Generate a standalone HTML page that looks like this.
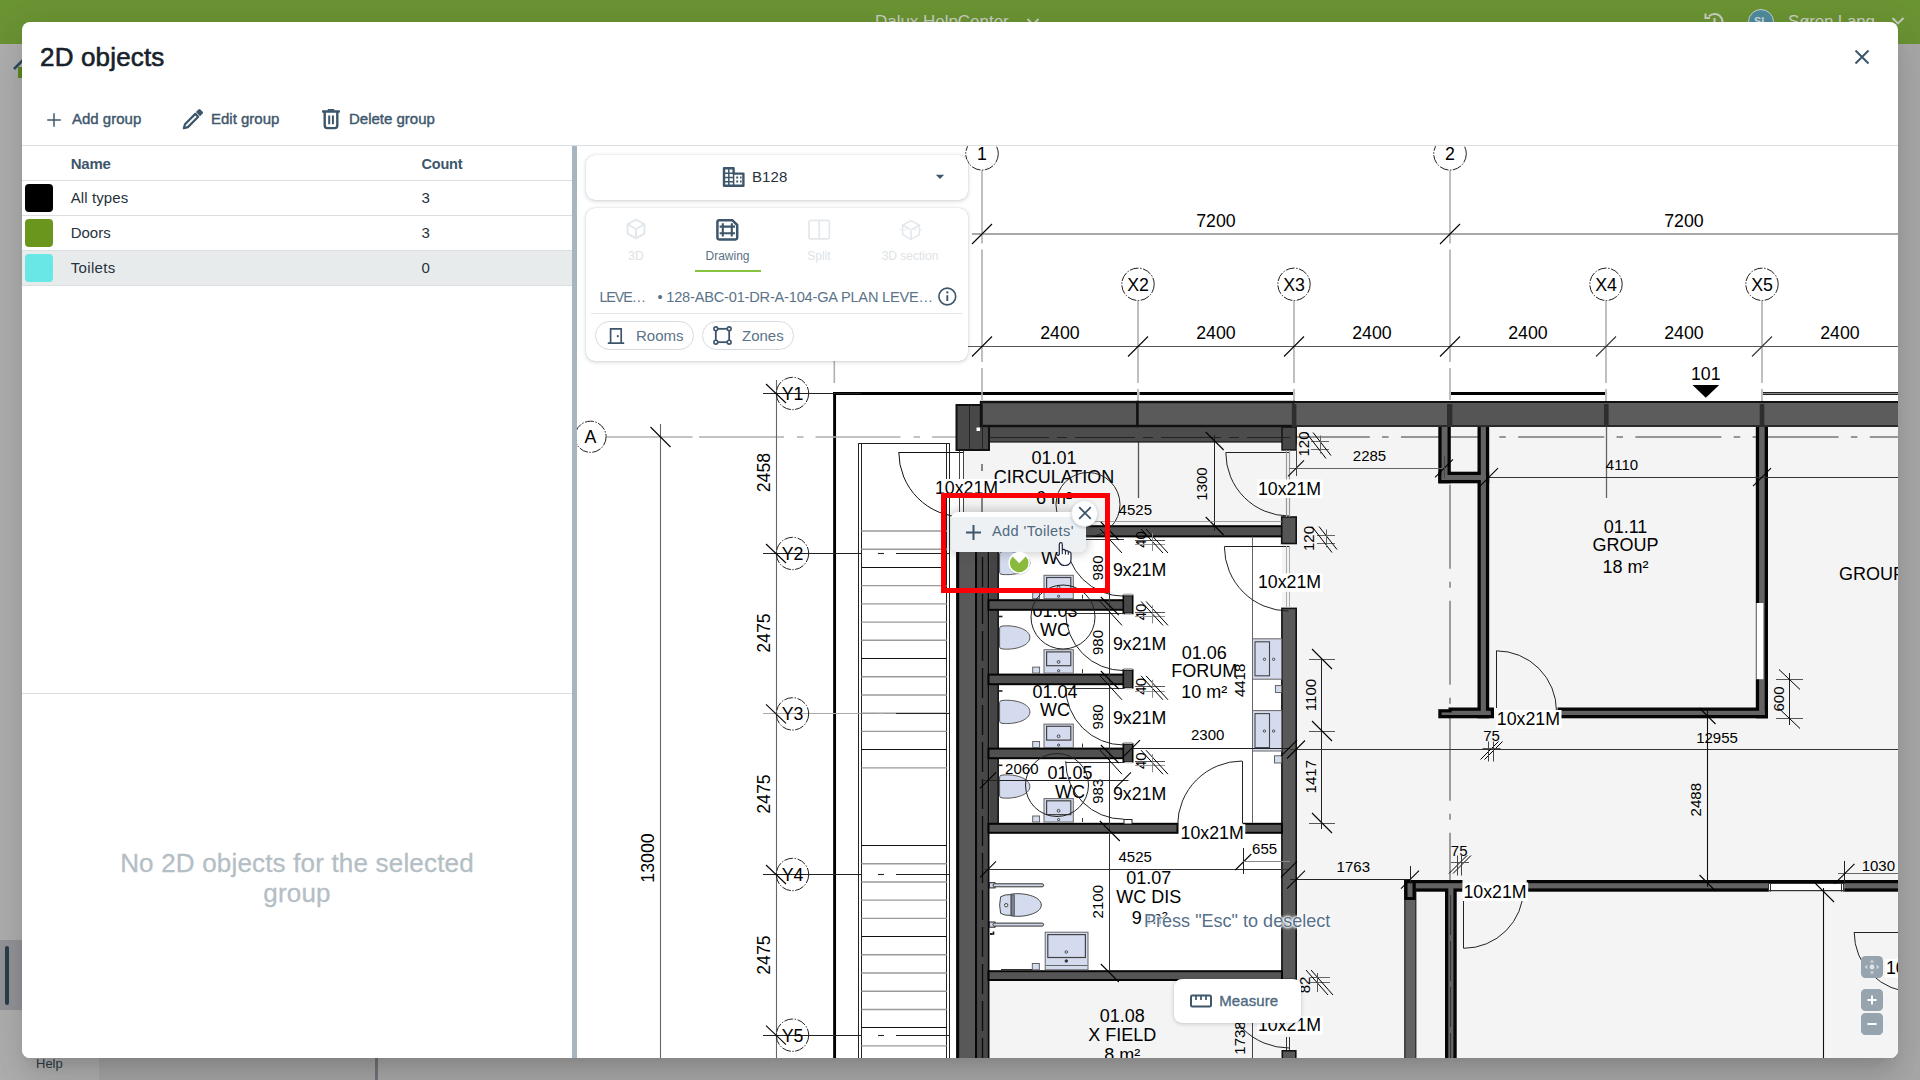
<!DOCTYPE html>
<html lang="en">
<head>
<meta charset="utf-8">
<title>2D objects</title>
<style>
*{box-sizing:border-box;margin:0;padding:0}
html,body{width:1920px;height:1080px;overflow:hidden}
body{font-family:"Liberation Sans",sans-serif;background:#a7a7a7;position:relative;color:#26323c}
.abs{position:absolute}
/* ---------- dimmed app behind the modal ---------- */
#topbar{left:0;top:0;width:1920px;height:44px;background:#6b9433}
#topbar .t{color:#c9cfc2;font-size:17px;white-space:nowrap;line-height:20px}
#leftstrip{left:0;top:44px;width:375px;height:1036px;background:linear-gradient(90deg,#b0b0b0 0,#b0b0b0 99px,#a6a6a6 99px)}
#rightarea{left:375px;top:44px;width:1545px;height:1036px;background:#a9a9a9}
#vline{left:375px;top:44px;width:3px;height:1036px;background:#6f7579}
#selitem{left:0;top:940px;width:22px;height:70px;background:#939598}
#selbar{left:4.5px;top:945.5px;width:4.5px;height:59.5px;border-radius:3px;background:#2c3e4b}
#help{left:36px;top:1056px;font-size:13px;color:#2f3b45;line-height:16px}
/* ---------- modal ---------- */
#modal{left:22px;top:22px;width:1876px;height:1036px;background:#fff;border-radius:8px;overflow:hidden;
 box-shadow:0 11px 15px -7px rgba(0,0,0,.12),0 24px 38px 3px rgba(0,0,0,.08),0 9px 46px 8px rgba(0,0,0,.07)}
#title{left:18px;top:20px;font-size:26px;line-height:30px;color:#17222c;white-space:nowrap;-webkit-text-stroke:.6px #17222c;letter-spacing:.17px}
#closex{left:1832px;top:27px;width:16px;height:16px}
.tb{top:84px;height:26px;font-size:15px;line-height:26px;color:#3d566b;white-space:nowrap;-webkit-text-stroke:.4px #3d566b}
#hr1{left:0;top:123px;width:1876px;height:1px;background:#d9dfe3}
/* left list */
#list{left:0;top:124px;width:550px;height:912px;background:#fff}
.th{top:8px;font-size:14.5px;font-weight:700;color:#3d566b;line-height:20px;letter-spacing:-.2px}
.row{left:0;width:550px;height:35px;border-top:1px solid #d9dfe3}
.row .sw{left:3px;top:3px;width:28px;height:28px;border-radius:4px}
.row .nm{left:48.7px;top:7px;font-size:15px;line-height:20px;color:#26323c;white-space:nowrap}
.row .ct{left:399.5px;top:7px;font-size:15px;line-height:20px;color:#26323c}
#hr2{left:0;top:547px;width:550px;height:1px;background:#d9dfe3}
#empty{left:0;top:702px;width:550px;text-align:center;font-size:26px;line-height:30px;color:#b4bec5;letter-spacing:.18px;-webkit-text-stroke:.3px #b4bec5}
#split{left:550px;top:124px;width:5px;height:912px;background:#a9b5be}
/* viewer */
#viewer{left:555px;top:124px;width:1321px;height:912px;background:#fff;overflow:hidden}
</style>
</head>
<body>
<!-- dimmed application behind -->
<div id="leftstrip" class="abs"></div>
<div id="rightarea" class="abs"></div>
<div id="vline" class="abs"></div>
<div id="topbar" class="abs">
  <div class="t abs" style="left:875px;top:11.5px;letter-spacing:-.03px">Dalux HelpCenter</div>
  <svg class="abs" style="left:1025.5px;top:16.6px" width="14" height="10" viewBox="0 0 14 10"><path d="M1.5 2 L7 7.5 L12.5 2" fill="none" stroke="#c9cfc2" stroke-width="1.8"/></svg>
  <svg class="abs" style="left:1702px;top:10px" width="24" height="24" viewBox="0 0 24 24"><path d="M4.5 12a8 8 0 1 0 2.4-5.7M3.5 3.5v4.5h4.5M12.5 8v4.5l3 2" fill="none" stroke="#c9cfc2" stroke-width="2"/></svg>
  <div class="abs" style="left:1748px;top:9px;width:26px;height:26px;border-radius:13px;background:#4f8c9c;border:1.5px solid #c9cfd2;color:#c9d6da;font-size:11px;font-weight:700;text-align:center;line-height:23px">SL</div>
  <div class="t abs" style="left:1788px;top:11.6px;letter-spacing:-.2px">Søren Lang</div>
  <svg class="abs" style="left:1891px;top:16px" width="14" height="10" viewBox="0 0 14 10"><path d="M1.5 2 L7 7.5 L12.5 2" fill="none" stroke="#c9cfc2" stroke-width="1.8"/></svg>
</div>
<svg class="abs" style="left:12px;top:58px" width="24" height="22" viewBox="0 0 24 22"><path d="M2 11 L12 1 L22 11" fill="none" stroke="#33485a" stroke-width="2.5"/><rect x="6" y="9" width="12" height="11" fill="#5f8a22"/></svg>
<div id="selitem" class="abs"></div>
<div id="selbar" class="abs"></div>
<div id="help" class="abs">Help</div>

<!-- modal dialog -->
<div id="modal" class="abs">
  <div id="title" class="abs">2D objects</div>
  <svg id="closex" class="abs" viewBox="0 0 16 16"><path d="M1.5 1.5 L14.5 14.5 M14.5 1.5 L1.5 14.5" stroke="#3d566b" stroke-width="2" fill="none"/></svg>

  <svg class="abs" style="left:24px;top:90px" width="16" height="16" viewBox="0 0 16 16"><path d="M8 1.2V14.8M1.2 8H14.8" stroke="#3d566b" stroke-width="1.5" fill="none"/></svg>
  <div class="tb abs" style="left:50px">Add group</div>
  <svg class="abs" style="left:160px;top:86px" width="22" height="22" viewBox="0 0 22 22"><path d="M1.8 20.3 L3.0 16.2 L13.3 5.9 L16.2 8.8 L5.9 19.1 Z" fill="none" stroke="#3d566b" stroke-width="2.2" stroke-linejoin="round"/><path d="M13.9 4.0 L16.5 1.4 Q17.4 0.6 18.3 1.4 L20.7 3.8 Q21.5 4.7 20.7 5.6 L18.1 8.2 Z" fill="#3d566b"/></svg>
  <div class="tb abs" style="left:189px">Edit group</div>
  <svg class="abs" style="left:300px;top:86px" width="18" height="22" viewBox="0 0 18 22"><path d="M2.7 4 V17.6 Q2.7 20.1 5.2 20.1 H12.8 Q15.3 20.1 15.3 17.6 V4" fill="none" stroke="#3d566b" stroke-width="2.4"/><path d="M1 3.4H17" stroke="#3d566b" stroke-width="2.5" stroke-linecap="round" fill="none"/><path d="M5.8 1.9H12.2" stroke="#3d566b" stroke-width="1.8" fill="none"/><path d="M7.2 7.4V16.2M10.9 7.4V16.2" stroke="#3d566b" stroke-width="2" fill="none"/></svg>
  <div class="tb abs" style="left:327px">Delete group</div>
  <div id="hr1" class="abs"></div>

  <div id="list" class="abs">
    <div class="th abs" style="left:48.7px;font-size:15px">Name</div>
    <div class="th abs" style="left:399.5px">Count</div>
    <div class="row abs" style="top:34px"><div class="sw abs" style="background:#000"></div><div class="nm abs" style="letter-spacing:.1px">All types</div><div class="ct abs">3</div></div>
    <div class="row abs" style="top:69px"><div class="sw abs" style="background:#6b961d"></div><div class="nm abs">Doors</div><div class="ct abs">3</div></div>
    <div class="row abs" style="top:104px;background:#e8ebec"><div class="sw abs" style="background:#69e6e6"></div><div class="nm abs" style="letter-spacing:.35px">Toilets</div><div class="ct abs">0</div></div>
    <div class="row abs" style="top:139px;height:1px"></div>
    <div id="hr2" class="abs"></div>
    <div id="empty" class="abs">No 2D objects for the selected<br>group</div>
  </div>
  <div id="split" class="abs"></div>

  <div id="viewer" class="abs">
<svg class="abs" style="left:-577px;top:-146px" width="1920" height="1080" viewBox="0 0 1920 1080" font-family="Liberation Sans, sans-serif">
<rect x="1296" y="427" width="604" height="633" fill="#f4f4f4"/>
<rect x="964" y="442" width="332" height="84" fill="#f4f4f4"/>
<rect x="988" y="980" width="308" height="80" fill="#f4f4f4"/>
<rect x="1282" y="543" width="14" height="66" fill="#f4f4f4"/>
<line x1="858.5" y1="443.5" x2="858.5" y2="1060" stroke="#222" stroke-width="1"/>
<line x1="861.5" y1="443.5" x2="861.5" y2="1060" stroke="#222" stroke-width="1"/>
<line x1="946.5" y1="443.5" x2="946.5" y2="1060" stroke="#222" stroke-width="1"/>
<line x1="949.5" y1="443.5" x2="949.5" y2="1060" stroke="#222" stroke-width="1"/>
<line x1="858.3" y1="443.5" x2="949.8" y2="443.5" stroke="#222" stroke-width="1.2"/>
<line x1="861.4" y1="531" x2="946.8" y2="531" stroke="#9a9a9a" stroke-width="1.4"/>
<line x1="861.4" y1="549.22" x2="946.8" y2="549.22" stroke="#9a9a9a" stroke-width="1.4"/>
<line x1="861.4" y1="567.5" x2="946.8" y2="567.5" stroke="#111" stroke-width="1.2"/>
<line x1="861.4" y1="585.66" x2="946.8" y2="585.66" stroke="#9a9a9a" stroke-width="1.4"/>
<line x1="861.4" y1="603.88" x2="946.8" y2="603.88" stroke="#9a9a9a" stroke-width="1.4"/>
<line x1="861.4" y1="622.1" x2="946.8" y2="622.1" stroke="#9a9a9a" stroke-width="1.4"/>
<line x1="861.4" y1="640.32" x2="946.8" y2="640.32" stroke="#9a9a9a" stroke-width="1.4"/>
<line x1="861.4" y1="658.5" x2="946.8" y2="658.5" stroke="#111" stroke-width="1.2"/>
<line x1="861.4" y1="676.76" x2="946.8" y2="676.76" stroke="#9a9a9a" stroke-width="1.4"/>
<line x1="861.4" y1="694.98" x2="946.8" y2="694.98" stroke="#9a9a9a" stroke-width="1.4"/>
<line x1="861.4" y1="713.2" x2="946.8" y2="713.2" stroke="#9a9a9a" stroke-width="1.4"/>
<line x1="861.4" y1="731.42" x2="946.8" y2="731.42" stroke="#9a9a9a" stroke-width="1.4"/>
<line x1="861.4" y1="749.5" x2="946.8" y2="749.5" stroke="#111" stroke-width="1.2"/>
<line x1="861.4" y1="767.86" x2="946.8" y2="767.86" stroke="#9a9a9a" stroke-width="1.4"/>
<line x1="861.4" y1="845.5" x2="946.8" y2="845.5" stroke="#111" stroke-width="1.2"/>
<line x1="861.4" y1="863.72" x2="946.8" y2="863.72" stroke="#9a9a9a" stroke-width="1.4"/>
<line x1="861.4" y1="881.94" x2="946.8" y2="881.94" stroke="#9a9a9a" stroke-width="1.4"/>
<line x1="861.4" y1="900.16" x2="946.8" y2="900.16" stroke="#9a9a9a" stroke-width="1.4"/>
<line x1="861.4" y1="918.38" x2="946.8" y2="918.38" stroke="#9a9a9a" stroke-width="1.4"/>
<line x1="861.4" y1="936.5" x2="946.8" y2="936.5" stroke="#111" stroke-width="1.2"/>
<line x1="861.4" y1="954.82" x2="946.8" y2="954.82" stroke="#9a9a9a" stroke-width="1.4"/>
<line x1="861.4" y1="973.04" x2="946.8" y2="973.04" stroke="#9a9a9a" stroke-width="1.4"/>
<line x1="861.4" y1="991.26" x2="946.8" y2="991.26" stroke="#9a9a9a" stroke-width="1.4"/>
<line x1="861.4" y1="1009.48" x2="946.8" y2="1009.48" stroke="#9a9a9a" stroke-width="1.4"/>
<line x1="861.4" y1="1027.5" x2="946.8" y2="1027.5" stroke="#111" stroke-width="1.2"/>
<line x1="861.4" y1="1045.92" x2="946.8" y2="1045.92" stroke="#9a9a9a" stroke-width="1.4"/>
<text x="1054" y="464" font-size="18" text-anchor="middle" fill="#000">01.01</text>
<text x="1054" y="482.6" font-size="18" text-anchor="middle" fill="#000">CIRCULATION</text>
<text x="1054" y="503.9" font-size="18" text-anchor="middle" fill="#000">6 m²</text>
<text x="1041" y="564.4" font-size="18" text-anchor="start" fill="#000">WC</text>
<text x="1055" y="616.9" font-size="18" text-anchor="middle" fill="#000">01.03</text>
<text x="1055" y="635.5" font-size="18" text-anchor="middle" fill="#000">WC</text>
<text x="1055" y="697.5" font-size="18" text-anchor="middle" fill="#000">01.04</text>
<text x="1055" y="716.1" font-size="18" text-anchor="middle" fill="#000">WC</text>
<text x="1070" y="779.2" font-size="18" text-anchor="middle" fill="#000">01.05</text>
<text x="1070" y="797.8" font-size="18" text-anchor="middle" fill="#000">WC</text>
<text x="1204.2" y="658.5" font-size="18" text-anchor="middle" fill="#000">01.06</text>
<text x="1204.2" y="677.1" font-size="18" text-anchor="middle" fill="#000">FORUM</text>
<text x="1204.2" y="698.4" font-size="18" text-anchor="middle" fill="#000">10 m²</text>
<text x="1148.8" y="884" font-size="18" text-anchor="middle" fill="#000">01.07</text>
<text x="1148.8" y="902.6" font-size="18" text-anchor="middle" fill="#000">WC DIS</text>
<text x="1131.7" y="923.5" font-size="18" text-anchor="start" fill="#000">9 m²</text>
<text x="1122.3" y="1022" font-size="18" text-anchor="middle" fill="#000">01.08</text>
<text x="1122.3" y="1040.7" font-size="18" text-anchor="middle" fill="#000">X FIELD</text>
<text x="1122.3" y="1061.1" font-size="18" text-anchor="middle" fill="#000">8 m²</text>
<text x="1625.5" y="532.5" font-size="18" text-anchor="middle" fill="#000">01.11</text>
<text x="1625.5" y="551.3" font-size="18" text-anchor="middle" fill="#000">GROUP</text>
<text x="1625.5" y="572.5" font-size="18" text-anchor="middle" fill="#000">18 m²</text>
<text x="1839" y="580" font-size="18" text-anchor="start" fill="#000">GROUP</text>
<line x1="833.1" y1="393.4" x2="1137" y2="393.4" stroke="#000" stroke-width="3"/>
<line x1="1139.5" y1="393.4" x2="1293" y2="393.4" stroke="#000" stroke-width="3"/>
<line x1="1451" y1="393.4" x2="1605" y2="393.4" stroke="#000" stroke-width="3"/>
<line x1="1763" y1="392.5" x2="1900" y2="392.5" stroke="#222" stroke-width="1"/>
<line x1="1763" y1="394.5" x2="1900" y2="394.5" stroke="#222" stroke-width="1"/>
<line x1="1763" y1="393.5" x2="1900" y2="393.5" stroke="#888" stroke-width="1.2"/>
<line x1="834.6" y1="392" x2="834.6" y2="1060" stroke="#000" stroke-width="2.9"/>
<line x1="834.3" y1="215" x2="834.3" y2="383" stroke="#b0b0b0" stroke-width="1.6"/>
<line x1="982" y1="170.5" x2="982" y2="243.5" stroke="#b0b0b0" stroke-width="1.6"/>
<line x1="982" y1="249.5" x2="982" y2="362" stroke="#b0b0b0" stroke-width="1.6"/>
<line x1="982" y1="368" x2="982" y2="400" stroke="#b0b0b0" stroke-width="1.6"/>
<line x1="1450" y1="170.5" x2="1450" y2="243.5" stroke="#b0b0b0" stroke-width="1.6"/>
<line x1="1450" y1="249.5" x2="1450" y2="362" stroke="#b0b0b0" stroke-width="1.6"/>
<line x1="1450" y1="368" x2="1450" y2="400" stroke="#b0b0b0" stroke-width="1.6"/>
<line x1="1138" y1="300.5" x2="1138" y2="383" stroke="#b0b0b0" stroke-width="1.6"/>
<line x1="1138" y1="389" x2="1138" y2="401" stroke="#b0b0b0" stroke-width="1.6"/>
<line x1="1294" y1="300.5" x2="1294" y2="383" stroke="#b0b0b0" stroke-width="1.6"/>
<line x1="1294" y1="389" x2="1294" y2="401" stroke="#b0b0b0" stroke-width="1.6"/>
<line x1="1606" y1="300.5" x2="1606" y2="383" stroke="#b0b0b0" stroke-width="1.6"/>
<line x1="1606" y1="389" x2="1606" y2="401" stroke="#b0b0b0" stroke-width="1.6"/>
<line x1="1762" y1="300.5" x2="1762" y2="383" stroke="#b0b0b0" stroke-width="1.6"/>
<line x1="1762" y1="389" x2="1762" y2="401" stroke="#b0b0b0" stroke-width="1.6"/>
<line x1="606.5" y1="437" x2="692.6" y2="437" stroke="#b0b0b0" stroke-width="1.6"/>
<line x1="699" y1="437" x2="956" y2="437" stroke="#b0b0b0" stroke-width="1.6" stroke-dasharray="85 13 6.5 12"/>
<line x1="1296" y1="437" x2="1900" y2="437" stroke="#777" stroke-width="1.4" stroke-dasharray="86 12.3 6.5 12.4" stroke-dashoffset="12.2"/>
<line x1="1450" y1="483" x2="1450" y2="1060" stroke="#777" stroke-width="1.4" stroke-dasharray="84 13 6 13" stroke-dashoffset="-1.8"/>
<line x1="1138.5" y1="442" x2="1138.5" y2="498" stroke="#555" stroke-width="1.3"/>
<line x1="982" y1="464" x2="982" y2="471" stroke="#555" stroke-width="1.4"/>
<line x1="982" y1="480" x2="982" y2="512" stroke="#555" stroke-width="1.4"/>
<line x1="1606.5" y1="427" x2="1606.5" y2="498" stroke="#666" stroke-width="1.3"/>
<line x1="972" y1="234" x2="1900" y2="234" stroke="#a8a8a8" stroke-width="1.8"/>
<line x1="972" y1="244" x2="992" y2="224" stroke="#000" stroke-width="1.1"/>
<line x1="1440" y1="244" x2="1460" y2="224" stroke="#000" stroke-width="1.1"/>
<line x1="966" y1="346.5" x2="1900" y2="346.5" stroke="#555" stroke-width="1.1"/>
<line x1="972" y1="356.5" x2="992" y2="336.5" stroke="#000" stroke-width="1.1"/>
<line x1="1128" y1="356.5" x2="1148" y2="336.5" stroke="#000" stroke-width="1.1"/>
<line x1="1284" y1="356.5" x2="1304" y2="336.5" stroke="#000" stroke-width="1.1"/>
<line x1="1440" y1="356.5" x2="1460" y2="336.5" stroke="#000" stroke-width="1.1"/>
<line x1="1596" y1="356.5" x2="1616" y2="336.5" stroke="#333" stroke-width="1.1"/>
<line x1="1752" y1="356.5" x2="1772" y2="336.5" stroke="#333" stroke-width="1.1"/>
<text x="1216" y="227" font-size="17.75" text-anchor="middle" fill="#000">7200</text>
<text x="1684" y="227" font-size="17.75" text-anchor="middle" fill="#000">7200</text>
<text x="1060" y="339.4" font-size="17.75" text-anchor="middle" fill="#000">2400</text>
<text x="1216" y="339.4" font-size="17.75" text-anchor="middle" fill="#000">2400</text>
<text x="1372" y="339.4" font-size="17.75" text-anchor="middle" fill="#000">2400</text>
<text x="1528" y="339.4" font-size="17.75" text-anchor="middle" fill="#000">2400</text>
<text x="1684" y="339.4" font-size="17.75" text-anchor="middle" fill="#000">2400</text>
<text x="1840" y="339.4" font-size="17.75" text-anchor="middle" fill="#000">2400</text>
<circle cx="982" cy="153.8" r="16.3" fill="#fff" stroke="#222" stroke-width="1" stroke-dasharray="9 1.5 1.5 1.5"/>
<text x="982" y="160" font-size="17.75" text-anchor="middle" fill="#000">1</text>
<circle cx="1450" cy="153.8" r="16.3" fill="#fff" stroke="#222" stroke-width="1" stroke-dasharray="9 1.5 1.5 1.5"/>
<text x="1450" y="160" font-size="17.75" text-anchor="middle" fill="#000">2</text>
<circle cx="1138" cy="284.3" r="16.2" fill="#fff" stroke="#222" stroke-width="1" stroke-dasharray="9 1.5 1.5 1.5"/>
<text x="1138" y="290.6" font-size="17.75" text-anchor="middle" fill="#000">X2</text>
<circle cx="1294" cy="284.3" r="16.2" fill="#fff" stroke="#222" stroke-width="1" stroke-dasharray="9 1.5 1.5 1.5"/>
<text x="1294" y="290.6" font-size="17.75" text-anchor="middle" fill="#000">X3</text>
<circle cx="1606" cy="284.3" r="16.2" fill="#fff" stroke="#222" stroke-width="1" stroke-dasharray="9 1.5 1.5 1.5"/>
<text x="1606" y="290.6" font-size="17.75" text-anchor="middle" fill="#000">X4</text>
<circle cx="1762" cy="284.3" r="16.2" fill="#fff" stroke="#222" stroke-width="1" stroke-dasharray="9 1.5 1.5 1.5"/>
<text x="1762" y="290.6" font-size="17.75" text-anchor="middle" fill="#000">X5</text>
<text x="1705.8" y="380" font-size="17.75" text-anchor="middle" fill="#000">101</text>
<path d="M1692.5 385 H1719.2 L1705.8 397.7 Z" fill="#000" stroke="none" stroke-width="0"/>
<line x1="660.5" y1="424" x2="660.5" y2="1060" stroke="#666" stroke-width="1.1"/>
<line x1="650.5" y1="427" x2="670.5" y2="447" stroke="#000" stroke-width="1.1"/>
<line x1="776.5" y1="380" x2="776.5" y2="1060" stroke="#666" stroke-width="1.1"/>
<line x1="763" y1="393.5" x2="834" y2="393.5" stroke="#222" stroke-width="1.2"/>
<line x1="834" y1="393.5" x2="861" y2="393.5" stroke="#222" stroke-width="1.0"/>
<line x1="766" y1="384" x2="786" y2="403" stroke="#000" stroke-width="1.1"/>
<circle cx="792.5" cy="393.5" r="16.2" fill="none" stroke="#222" stroke-width="1" stroke-dasharray="9 1.5 1.5 1.5"/>
<text x="792.5" y="399.8" font-size="17.75" text-anchor="middle" fill="#000">Y1</text>
<line x1="763" y1="553.5" x2="834" y2="553.5" stroke="#222" stroke-width="1.2"/>
<line x1="834" y1="553.5" x2="861" y2="553.5" stroke="#222" stroke-width="1.0"/>
<line x1="878" y1="553.5" x2="884" y2="553.5" stroke="#222" stroke-width="1.1"/>
<line x1="896" y1="553.5" x2="950" y2="553.5" stroke="#222" stroke-width="1.1"/>
<line x1="766" y1="544" x2="786" y2="563" stroke="#000" stroke-width="1.1"/>
<circle cx="792.5" cy="553.5" r="16.2" fill="none" stroke="#222" stroke-width="1" stroke-dasharray="9 1.5 1.5 1.5"/>
<text x="792.5" y="559.8" font-size="17.75" text-anchor="middle" fill="#000">Y2</text>
<line x1="763" y1="713.5" x2="834" y2="713.5" stroke="#aaa" stroke-width="1.2"/>
<line x1="834" y1="713.5" x2="861" y2="713.5" stroke="#aaa" stroke-width="1.0"/>
<line x1="878" y1="713.5" x2="884" y2="713.5" stroke="#aaa" stroke-width="1.1"/>
<line x1="896" y1="713.5" x2="950" y2="713.5" stroke="#222" stroke-width="1.1"/>
<line x1="766" y1="704.4" x2="786" y2="723.4" stroke="#000" stroke-width="1.1"/>
<circle cx="792.5" cy="713.9" r="16.2" fill="none" stroke="#222" stroke-width="1" stroke-dasharray="9 1.5 1.5 1.5"/>
<text x="792.5" y="720.2" font-size="17.75" text-anchor="middle" fill="#000">Y3</text>
<line x1="763" y1="874.5" x2="834" y2="874.5" stroke="#222" stroke-width="1.2"/>
<line x1="834" y1="874.5" x2="861" y2="874.5" stroke="#222" stroke-width="1.0"/>
<line x1="878" y1="874.5" x2="884" y2="874.5" stroke="#222" stroke-width="1.1"/>
<line x1="896" y1="874.5" x2="950" y2="874.5" stroke="#222" stroke-width="1.1"/>
<line x1="766" y1="865" x2="786" y2="884" stroke="#000" stroke-width="1.1"/>
<circle cx="792.5" cy="874.5" r="16.2" fill="none" stroke="#222" stroke-width="1" stroke-dasharray="9 1.5 1.5 1.5"/>
<text x="792.5" y="880.8" font-size="17.75" text-anchor="middle" fill="#000">Y4</text>
<line x1="763" y1="1035.5" x2="834" y2="1035.5" stroke="#222" stroke-width="1.2"/>
<line x1="834" y1="1035.5" x2="861" y2="1035.5" stroke="#222" stroke-width="1.0"/>
<line x1="878" y1="1035.5" x2="884" y2="1035.5" stroke="#222" stroke-width="1.1"/>
<line x1="896" y1="1035.5" x2="950" y2="1035.5" stroke="#222" stroke-width="1.1"/>
<line x1="766" y1="1025.7" x2="786" y2="1044.7" stroke="#000" stroke-width="1.1"/>
<circle cx="792.5" cy="1035.2" r="16.2" fill="none" stroke="#222" stroke-width="1" stroke-dasharray="9 1.5 1.5 1.5"/>
<text x="792.5" y="1041.5" font-size="17.75" text-anchor="middle" fill="#000">Y5</text>
<text x="769.5" y="472.5" font-size="17.75" text-anchor="middle" fill="#000" transform="rotate(-90 769.5 472.5)">2458</text>
<text x="769.5" y="633" font-size="17.75" text-anchor="middle" fill="#000" transform="rotate(-90 769.5 633)">2475</text>
<text x="769.5" y="794" font-size="17.75" text-anchor="middle" fill="#000" transform="rotate(-90 769.5 794)">2475</text>
<text x="769.5" y="955" font-size="17.75" text-anchor="middle" fill="#000" transform="rotate(-90 769.5 955)">2475</text>
<text x="653.5" y="858" font-size="17.75" text-anchor="middle" fill="#000" transform="rotate(-90 653.5 858)">13000</text>
<circle cx="590.5" cy="436.8" r="15.6" fill="#fff" stroke="#222" stroke-width="1" stroke-dasharray="9 1.5 1.5 1.5"/>
<text x="590.5" y="443.2" font-size="17.75" text-anchor="middle" fill="#000">A</text>
<line x1="898.8" y1="452.5" x2="964" y2="452.5" stroke="#111" stroke-width="1"/>
<path d="M898.8 452.1 A65 65 0 0 0 964 517.1" fill="none" stroke="#111" stroke-width="1"/>
<line x1="959.5" y1="450" x2="959.5" y2="513" stroke="#444" stroke-width="1"/>
<line x1="963.5" y1="450" x2="963.5" y2="513" stroke="#444" stroke-width="1"/>
<rect x="989" y="425" width="307" height="17" fill="#4c4c4c" stroke="#1a1a1a" stroke-width="1.2"/>
<rect x="956.5" y="405" width="32.5" height="45" fill="#484848" stroke="#111" stroke-width="2"/>
<rect x="1282" y="427" width="14.2" height="23" fill="#484848" stroke="#111" stroke-width="1.4"/>
<rect x="981" y="402" width="156.5" height="24" fill="#575757" stroke="#111" stroke-width="2.4"/>
<rect x="1137.5" y="402" width="156.5" height="24" fill="#5a5a5a" stroke="#111" stroke-width="2.4"/>
<rect x="1294" y="402.6" width="606" height="23.6" fill="#5c5c5c" stroke="none" stroke-width="1"/>
<line x1="1294" y1="402.1" x2="1900" y2="402.1" stroke="#111" stroke-width="2"/>
<line x1="1294" y1="426" x2="1900" y2="426" stroke="#2a2a2a" stroke-width="2"/>
<rect x="1291.8" y="404" width="4.6" height="23" fill="#2e2e2e"/>
<rect x="1447" y="404" width="5.6" height="23" fill="#2e2e2e"/>
<rect x="1604" y="404" width="4.6" height="23" fill="#2e2e2e"/>
<rect x="1759.7" y="404" width="4.6" height="23" fill="#2e2e2e"/>
<rect x="1452.6" y="403.6" width="151.4" height="21.4" fill="#555"/>
<line x1="989" y1="437.5" x2="1290" y2="437.5" stroke="#222" stroke-width="1.2" stroke-dasharray="60 8 10 8"/>
<line x1="982.5" y1="404" x2="982.5" y2="450" stroke="#222" stroke-width="1"/>
<rect x="976.5" y="427.5" width="3.5" height="3.5" fill="#fff"/>
<line x1="969.5" y1="405" x2="969.5" y2="450" stroke="#222" stroke-width="1"/>
<rect x="956.2" y="517" width="33" height="543" fill="#4a4a4a"/>
<rect x="958.6" y="517" width="16.8" height="543" fill="#585858"/>
<rect x="956.2" y="517" width="3" height="543" fill="#080808"/>
<rect x="975" y="517" width="2.2" height="543" fill="#080808"/>
<rect x="977.2" y="517" width="10.8" height="543" fill="#474747"/>
<rect x="987.8" y="517" width="1.6" height="543" fill="#080808"/>
<line x1="982.5" y1="520" x2="982.5" y2="1060" stroke="#0c0c0c" stroke-width="1.3" stroke-dasharray="30 7"/>
<rect x="989.2" y="536" width="9.1" height="288" fill="#454545"/>
<line x1="998.2" y1="536" x2="998.2" y2="824" stroke="#0a0a0a" stroke-width="1.4"/>
<rect x="1085" y="526.2" width="197" height="10.2" fill="#505050" stroke="#050505" stroke-width="2"/>
<rect x="1281.7" y="517" width="14.5" height="26.5" fill="#555" stroke="#111" stroke-width="1.6"/>
<rect x="1281.9" y="608.4" width="14.3" height="371.1" fill="#595959" stroke="#111" stroke-width="1.6"/>
<rect x="1282.3" y="1050.8" width="13.5" height="9.2" fill="#595959" stroke="#111" stroke-width="1.6"/>
<rect x="988.5" y="600.2" width="135.5" height="9.6" fill="#505050" stroke="#050505" stroke-width="2"/>
<rect x="1123.3" y="595.5" width="9.4" height="17.9" fill="#484848" stroke="#050505" stroke-width="1.6"/>
<rect x="1123.5" y="593.5" width="9.2" height="2" fill="#b5b5b5"/>
<rect x="1125" y="613.4" width="7" height="1.6" fill="#c8c8c8"/>
<rect x="988.5" y="674.6" width="135.5" height="9.6" fill="#505050" stroke="#050505" stroke-width="2"/>
<rect x="1123.3" y="669.9" width="9.4" height="17.9" fill="#484848" stroke="#050505" stroke-width="1.6"/>
<rect x="1123.5" y="667.9" width="9.2" height="2" fill="#b5b5b5"/>
<rect x="1125" y="687.8" width="7" height="1.6" fill="#c8c8c8"/>
<rect x="988.5" y="748.6" width="135.5" height="9.6" fill="#505050" stroke="#050505" stroke-width="2"/>
<rect x="1123.3" y="743.9" width="9.4" height="17.9" fill="#484848" stroke="#050505" stroke-width="1.6"/>
<rect x="1123.5" y="741.9" width="9.2" height="2" fill="#b5b5b5"/>
<rect x="1125" y="761.8" width="7" height="1.6" fill="#c8c8c8"/>
<rect x="988.5" y="823.8" width="189" height="9" fill="#555" stroke="#050505" stroke-width="2"/>
<rect x="1244" y="823.8" width="38" height="9" fill="#555" stroke="#050505" stroke-width="2"/>
<rect x="1124" y="819.5" width="8" height="4.5" fill="#fff" stroke="#222" stroke-width="1"/>
<rect x="988.5" y="971.2" width="293.5" height="8.8" fill="#555" stroke="#050505" stroke-width="2"/>
<line x1="1109.5" y1="536.6" x2="1109.5" y2="971" stroke="#333" stroke-width="1"/>
<line x1="1252.5" y1="536.6" x2="1252.5" y2="823" stroke="#666" stroke-width="1"/>
<line x1="1252.5" y1="1023" x2="1252.5" y2="1060" stroke="#444" stroke-width="1"/>
<path d="M999.6 553.6 Q999.4 551.5 1003 551.5 C1016 550.4 1029.9 555 1029.9 563 C1029.9 571 1016 575.6 1003 574.5 Q999.4 574.5 999.6 572.4 Z" fill="#d4dbee" stroke="#555" stroke-width="1"/>
<path d="M999.6 628.1 Q999.4 626 1003 626 C1016 624.9 1029.9 629.5 1029.9 637.5 C1029.9 645.5 1016 650.1 1003 649 Q999.4 649 999.6 646.9 Z" fill="#d4dbee" stroke="#555" stroke-width="1"/>
<path d="M999.6 702.5 Q999.4 700.4 1003 700.4 C1016 699.3 1029.9 703.9 1029.9 711.9 C1029.9 719.9 1016 724.5 1003 723.4 Q999.4 723.4 999.6 721.3 Z" fill="#d4dbee" stroke="#555" stroke-width="1"/>
<path d="M999.6 777.1 Q999.4 775 1003 775 C1016 773.9 1029.9 778.5 1029.9 786.5 C1029.9 794.5 1016 799.1 1003 798 Q999.4 798 999.6 795.9 Z" fill="#d4dbee" stroke="#555" stroke-width="1"/>
<rect x="1044" y="575.3" width="29.3" height="23.4" fill="#d4dbee" stroke="#666" stroke-width="1"/>
<rect x="1046.6" y="577.5" width="24.2" height="13.8" fill="#d4dbee" stroke="#444" stroke-width="1.2"/>
<circle cx="1058.6" cy="587.5" r="1.4" fill="none" stroke="#333" stroke-width="0.9"/>
<circle cx="1058.6" cy="596.3" r="1.1" fill="none" stroke="#333" stroke-width="0.9"/>
<rect x="1032.7" y="592.7" width="6.9" height="6" fill="#d4dbee" stroke="#555" stroke-width="0.9"/>
<line x1="1082.5" y1="594.8" x2="1082.5" y2="598.7" stroke="#333" stroke-width="1"/>
<rect x="1044" y="649.7" width="29.3" height="23.4" fill="#d4dbee" stroke="#666" stroke-width="1"/>
<rect x="1046.6" y="651.9" width="24.2" height="13.8" fill="#d4dbee" stroke="#444" stroke-width="1.2"/>
<circle cx="1058.6" cy="661.9" r="1.4" fill="none" stroke="#333" stroke-width="0.9"/>
<circle cx="1058.6" cy="670.7" r="1.1" fill="none" stroke="#333" stroke-width="0.9"/>
<rect x="1032.7" y="667.1" width="6.9" height="6" fill="#d4dbee" stroke="#555" stroke-width="0.9"/>
<line x1="1082.5" y1="669.2" x2="1082.5" y2="673.1" stroke="#333" stroke-width="1"/>
<rect x="1044" y="724.1" width="29.3" height="23.4" fill="#d4dbee" stroke="#666" stroke-width="1"/>
<rect x="1046.6" y="726.3" width="24.2" height="13.8" fill="#d4dbee" stroke="#444" stroke-width="1.2"/>
<circle cx="1058.6" cy="736.3" r="1.4" fill="none" stroke="#333" stroke-width="0.9"/>
<circle cx="1058.6" cy="745.1" r="1.1" fill="none" stroke="#333" stroke-width="0.9"/>
<rect x="1032.7" y="741.5" width="6.9" height="6" fill="#d4dbee" stroke="#555" stroke-width="0.9"/>
<line x1="1082.5" y1="743.6" x2="1082.5" y2="747.5" stroke="#333" stroke-width="1"/>
<rect x="1044" y="798.6" width="29.3" height="23.4" fill="#d4dbee" stroke="#666" stroke-width="1"/>
<rect x="1046.6" y="800.8" width="24.2" height="13.8" fill="#d4dbee" stroke="#444" stroke-width="1.2"/>
<circle cx="1058.6" cy="810.8" r="1.4" fill="none" stroke="#333" stroke-width="0.9"/>
<circle cx="1058.6" cy="819.6" r="1.1" fill="none" stroke="#333" stroke-width="0.9"/>
<rect x="1032.7" y="816" width="6.9" height="6" fill="#d4dbee" stroke="#555" stroke-width="0.9"/>
<line x1="1082.5" y1="818.1" x2="1082.5" y2="822" stroke="#333" stroke-width="1"/>
<line x1="998.5" y1="616.5" x2="1002.5" y2="616.5" stroke="#222" stroke-width="1.6"/>
<line x1="998.5" y1="691" x2="1002.5" y2="691" stroke="#222" stroke-width="1.6"/>
<line x1="998.5" y1="765.3" x2="1002.5" y2="765.3" stroke="#222" stroke-width="1.6"/>
<rect x="1252.5" y="638.8" width="29.2" height="40.4" fill="#d4dbee" stroke="#666" stroke-width="1"/>
<rect x="1255" y="641.8" width="14.5" height="34" fill="#d4dbee" stroke="#444" stroke-width="1.1"/>
<circle cx="1264.5" cy="659.3" r="1.2" fill="none" stroke="#333" stroke-width="0.8"/>
<circle cx="1273.6" cy="659.3" r="1.2" fill="none" stroke="#333" stroke-width="0.8"/>
<rect x="1252.5" y="710.6" width="29.2" height="40.4" fill="#d4dbee" stroke="#666" stroke-width="1"/>
<rect x="1255" y="713.6" width="14.5" height="34" fill="#d4dbee" stroke="#444" stroke-width="1.1"/>
<circle cx="1264.5" cy="731.1" r="1.2" fill="none" stroke="#333" stroke-width="0.8"/>
<circle cx="1273.6" cy="731.1" r="1.2" fill="none" stroke="#333" stroke-width="0.8"/>
<rect x="1275.4" y="685.6" width="6.3" height="6.9" fill="#d4dbee" stroke="#555" stroke-width="0.9"/>
<rect x="1274.5" y="755.8" width="7.2" height="7.2" fill="#d4dbee" stroke="#555" stroke-width="0.9"/>
<rect x="989.4" y="882.7" width="5.6" height="5.2" fill="#cfd6e6" stroke="#222" stroke-width="1"/>
<rect x="993" y="883.8" width="50.6" height="3" fill="#cfd6e6" stroke="#333" stroke-width="1" rx="1.5"/>
<rect x="989.4" y="922" width="5.6" height="5.2" fill="#cfd6e6" stroke="#222" stroke-width="1"/>
<rect x="993" y="923.1" width="50.6" height="3" fill="#cfd6e6" stroke="#333" stroke-width="1" rx="1.5"/>
<path d="M990 934 H993.5 V931.5" fill="none" stroke="#111" stroke-width="1.6"/>
<path d="M1010.5 894.3 C1022 892 1041.3 896 1041.3 905 C1041.3 914 1022 918 1010.5 915.7 Z" fill="#d4dbee" stroke="#444" stroke-width="1"/>
<path d="M1000.6 896.8 Q1004.5 894.3 1011 894.6 L1011 915.4 Q1004.5 915.8 1000.6 913.3 Q998.7 905 1000.6 896.8Z" fill="#d4dbee" stroke="#444" stroke-width="1"/>
<rect x="1011.3" y="894.8" width="3" height="20.5" fill="#7d8290" stroke="#444" stroke-width="0.7"/>
<circle cx="1006.2" cy="905.2" r="1.7" fill="#e8ecf5" stroke="#333" stroke-width="0.9"/>
<rect x="1045.2" y="932.2" width="42.8" height="37.6" fill="#d4dbee" stroke="#666" stroke-width="1"/>
<rect x="1047.8" y="934.6" width="37.6" height="22.9" fill="#d4dbee" stroke="#444" stroke-width="1.2"/>
<circle cx="1066.3" cy="952" r="1.3" fill="none" stroke="#333" stroke-width="0.8"/>
<circle cx="1066.3" cy="961" r="1.3" fill="#333" stroke="#333" stroke-width="0.8"/>
<line x1="1046" y1="965.5" x2="1087.5" y2="965.5" stroke="#666" stroke-width="1"/>
<rect x="1032.3" y="963.5" width="7" height="6.3" fill="#d4dbee" stroke="#555" stroke-width="0.9"/>
<line x1="1001" y1="969.5" x2="1032" y2="969.5" stroke="#333" stroke-width="1"/>
<line x1="990" y1="934" x2="992" y2="934" stroke="#222" stroke-width="2"/>
<line x1="1225.8" y1="452.5" x2="1289" y2="452.5" stroke="#222" stroke-width="1"/>
<path d="M1225.8 452.6 A63.3 63.3 0 0 0 1289 516" fill="none" stroke="#222" stroke-width="1"/>
<line x1="1289.5" y1="450" x2="1289.5" y2="517" stroke="#999" stroke-width="1.2"/>
<line x1="1286.5" y1="450" x2="1286.5" y2="517" stroke="#999" stroke-width="1.2"/>
<line x1="1224.4" y1="546.5" x2="1290" y2="546.5" stroke="#222" stroke-width="1"/>
<path d="M1224.4 546.7 A64.4 64.4 0 0 0 1288.6 611" fill="none" stroke="#222" stroke-width="1"/>
<line x1="1286.5" y1="546" x2="1286.5" y2="608" stroke="#aaa" stroke-width="1"/>
<line x1="1289.5" y1="546" x2="1289.5" y2="608" stroke="#aaa" stroke-width="1"/>
<path d="M1065.7 538.2 A58 58 0 0 0 1123.7 596.2" fill="none" stroke="#222" stroke-width="1"/>
<line x1="1065.7" y1="539.5" x2="1124" y2="539.5" stroke="#333" stroke-width="1"/>
<path d="M1065.7 612.6 A58 58 0 0 0 1123.7 670.6" fill="none" stroke="#222" stroke-width="1"/>
<line x1="1065.7" y1="613.5" x2="1124" y2="613.5" stroke="#333" stroke-width="1"/>
<path d="M1065.7 687 A58 58 0 0 0 1123.7 745" fill="none" stroke="#222" stroke-width="1"/>
<line x1="1065.7" y1="688.5" x2="1124" y2="688.5" stroke="#333" stroke-width="1"/>
<path d="M1065.7 761.2 A58 58 0 0 0 1123.7 819.2" fill="none" stroke="#222" stroke-width="1"/>
<line x1="1065.7" y1="762.5" x2="1124" y2="762.5" stroke="#333" stroke-width="1"/>
<circle cx="1088" cy="504.5" r="32" fill="none" stroke="#222" stroke-width="1"/>
<circle cx="1063" cy="617" r="32" fill="none" stroke="#222" stroke-width="1"/>
<circle cx="1057" cy="785" r="31.5" fill="none" stroke="#222" stroke-width="1"/>
<line x1="1242.5" y1="761" x2="1242.5" y2="823.5" stroke="#222" stroke-width="1"/>
<path d="M1242 761 A64.6 64.6 0 0 0 1177.6 825.6" fill="none" stroke="#222" stroke-width="1"/>
<line x1="1496.5" y1="650.8" x2="1496.5" y2="708" stroke="#222" stroke-width="1"/>
<path d="M1496.3 650.8 A60.2 60.2 0 0 1 1556.5 711" fill="none" stroke="#222" stroke-width="1"/>
<line x1="1463.5" y1="891" x2="1463.5" y2="948.3" stroke="#222" stroke-width="1"/>
<path d="M1463.7 948.3 A59.8 59.8 0 0 0 1523.5 888.5" fill="none" stroke="#222" stroke-width="1"/>
<line x1="1854.2" y1="932.5" x2="1900" y2="932.5" stroke="#222" stroke-width="1"/>
<path d="M1854.2 932 A59.8 59.8 0 0 0 1914 992" fill="none" stroke="#222" stroke-width="1"/>
<path d="M1224 983 A65 65 0 0 0 1289 1048" fill="none" stroke="#222" stroke-width="1"/>
<line x1="1286.5" y1="1037" x2="1286.5" y2="1050" stroke="#333" stroke-width="1"/>
<line x1="1289.5" y1="1037" x2="1289.5" y2="1050" stroke="#333" stroke-width="1"/>
<rect x="1438.3" y="427" width="12.5" height="56.3" fill="#050505"/>
<rect x="1438.3" y="471.7" width="50.9" height="11.6" fill="#050505"/>
<rect x="1477.5" y="427" width="11.7" height="291.3" fill="#050505"/>
<rect x="1438.3" y="709.2" width="10.7" height="9.1" fill="#050505"/>
<rect x="1448.5" y="707.5" width="45.5" height="10.8" fill="#050505"/>
<rect x="1557.5" y="707.5" width="210.5" height="10.8" fill="#050505"/>
<rect x="1755.8" y="427" width="12.2" height="291.3" fill="#050505"/>
<rect x="1404.2" y="880" width="58.3" height="11.7" fill="#050505"/>
<rect x="1526.7" y="880" width="373.3" height="11.7" fill="#050505"/>
<rect x="1445" y="891" width="11.7" height="169" fill="#050505"/>
<rect x="1441.6" y="427" width="5.9" height="53" fill="#636363"/>
<rect x="1441.6" y="475" width="44.3" height="5" fill="#636363"/>
<rect x="1480.8" y="427" width="5.1" height="288" fill="#636363"/>
<rect x="1441.6" y="712.4" width="49.1" height="2.6" fill="#636363"/>
<rect x="1451.8" y="710.8" width="38.9" height="4.2" fill="#636363"/>
<rect x="1560.8" y="710.8" width="203.9" height="4.2" fill="#636363"/>
<rect x="1759.1" y="427" width="5.6" height="288" fill="#636363"/>
<rect x="1407.5" y="883.2" width="55" height="5.2" fill="#636363"/>
<rect x="1526.7" y="883.2" width="373.3" height="5.2" fill="#636363"/>
<rect x="1448.3" y="885" width="5.1" height="175" fill="#636363"/>
<rect x="1755.8" y="603" width="7.6" height="76.2" fill="#fff"/>
<line x1="1756.5" y1="603" x2="1756.5" y2="679.2" stroke="#777" stroke-width="1"/>
<rect x="1768" y="883" width="76.2" height="8.7" fill="#fff"/>
<line x1="1768" y1="883.5" x2="1844.2" y2="883.5" stroke="#333" stroke-width="1"/>
<line x1="1768" y1="890.5" x2="1844.2" y2="890.5" stroke="#333" stroke-width="1"/>
<line x1="1768.5" y1="883" x2="1768.5" y2="891.7" stroke="#333" stroke-width="1"/>
<line x1="1770.5" y1="883" x2="1770.5" y2="891.7" stroke="#333" stroke-width="1"/>
<line x1="1841.5" y1="883" x2="1841.5" y2="891.7" stroke="#333" stroke-width="1"/>
<line x1="1843.5" y1="883" x2="1843.5" y2="891.7" stroke="#333" stroke-width="1"/>
<rect x="1404.8" y="890" width="11" height="170" fill="#636363" stroke="#222" stroke-width="1.2"/>
<rect x="1404.2" y="880" width="11.6" height="20" fill="#050505"/>
<rect x="1407.5" y="883.2" width="5" height="13.8" fill="#636363"/>
<line x1="1450.5" y1="895" x2="1450.5" y2="1060" stroke="#333" stroke-width="1" stroke-dasharray="40 6"/>
<text x="1135.3" y="514.7" font-size="15" text-anchor="middle" fill="#000">4525</text>
<line x1="1214.5" y1="435" x2="1214.5" y2="531" stroke="#222" stroke-width="1"/>
<line x1="1205.7" y1="432" x2="1223.7" y2="450" stroke="#000" stroke-width="1.1"/>
<line x1="1205.7" y1="517" x2="1223.7" y2="535" stroke="#000" stroke-width="1.1"/>
<text x="1207" y="484" font-size="15" text-anchor="middle" fill="#000" transform="rotate(-90 1207 484)">1300</text>
<line x1="988" y1="521.5" x2="1282" y2="521.5" stroke="#888" stroke-width="0.8"/>
<text x="1103" y="568" font-size="15" text-anchor="middle" fill="#000" transform="rotate(-90 1103 568)">980</text>
<text x="1103" y="642.5" font-size="15" text-anchor="middle" fill="#000" transform="rotate(-90 1103 642.5)">980</text>
<text x="1103" y="716.9" font-size="15" text-anchor="middle" fill="#000" transform="rotate(-90 1103 716.9)">980</text>
<text x="1103" y="791.3" font-size="15" text-anchor="middle" fill="#000" transform="rotate(-90 1103 791.3)">983</text>
<text x="1113" y="575.8" font-size="17.75" text-anchor="start" fill="#000">9x21M</text>
<text x="1113" y="650.2" font-size="17.75" text-anchor="start" fill="#000">9x21M</text>
<text x="1113" y="724.3" font-size="17.75" text-anchor="start" fill="#000">9x21M</text>
<text x="1113" y="799.6" font-size="17.75" text-anchor="start" fill="#000">9x21M</text>
<text x="1146" y="539.5" font-size="15" text-anchor="middle" fill="#000" transform="rotate(-90 1146 539.5)">40</text>
<line x1="1135" y1="540.5" x2="1165" y2="540.5" stroke="#555" stroke-width="1"/>
<line x1="1135" y1="544.5" x2="1165" y2="544.5" stroke="#999" stroke-width="1"/>
<line x1="1141" y1="529" x2="1163" y2="553" stroke="#000" stroke-width="1"/>
<line x1="1146" y1="529" x2="1168" y2="553" stroke="#000" stroke-width="1"/>
<line x1="1152.5" y1="533" x2="1152.5" y2="551" stroke="#888" stroke-width="1"/>
<line x1="1100" y1="529" x2="1122" y2="553" stroke="#000" stroke-width="1"/>
<text x="1146" y="611.9" font-size="15" text-anchor="middle" fill="#000" transform="rotate(-90 1146 611.9)">40</text>
<line x1="1135" y1="612.5" x2="1165" y2="612.5" stroke="#555" stroke-width="1"/>
<line x1="1135" y1="616.5" x2="1165" y2="616.5" stroke="#999" stroke-width="1"/>
<line x1="1141" y1="601.4" x2="1163" y2="625.4" stroke="#000" stroke-width="1"/>
<line x1="1146" y1="601.4" x2="1168" y2="625.4" stroke="#000" stroke-width="1"/>
<line x1="1152.5" y1="605.4" x2="1152.5" y2="623.4" stroke="#888" stroke-width="1"/>
<line x1="1100" y1="601.4" x2="1122" y2="625.4" stroke="#000" stroke-width="1"/>
<text x="1146" y="686.3" font-size="15" text-anchor="middle" fill="#000" transform="rotate(-90 1146 686.3)">40</text>
<line x1="1135" y1="686.5" x2="1165" y2="686.5" stroke="#555" stroke-width="1"/>
<line x1="1135" y1="691.5" x2="1165" y2="691.5" stroke="#999" stroke-width="1"/>
<line x1="1141" y1="675.8" x2="1163" y2="699.8" stroke="#000" stroke-width="1"/>
<line x1="1146" y1="675.8" x2="1168" y2="699.8" stroke="#000" stroke-width="1"/>
<line x1="1152.5" y1="679.8" x2="1152.5" y2="697.8" stroke="#888" stroke-width="1"/>
<line x1="1100" y1="675.8" x2="1122" y2="699.8" stroke="#000" stroke-width="1"/>
<text x="1146" y="760.7" font-size="15" text-anchor="middle" fill="#000" transform="rotate(-90 1146 760.7)">40</text>
<line x1="1135" y1="761.5" x2="1165" y2="761.5" stroke="#555" stroke-width="1"/>
<line x1="1135" y1="765.5" x2="1165" y2="765.5" stroke="#999" stroke-width="1"/>
<line x1="1141" y1="750.2" x2="1163" y2="774.2" stroke="#000" stroke-width="1"/>
<line x1="1146" y1="750.2" x2="1168" y2="774.2" stroke="#000" stroke-width="1"/>
<line x1="1152.5" y1="754.2" x2="1152.5" y2="772.2" stroke="#888" stroke-width="1"/>
<line x1="1100" y1="750.2" x2="1122" y2="774.2" stroke="#000" stroke-width="1"/>
<line x1="981.7" y1="780.5" x2="1128.5" y2="780.5" stroke="#222" stroke-width="1"/>
<line x1="980" y1="788.4" x2="996" y2="772.4" stroke="#000" stroke-width="1.1"/>
<line x1="1115" y1="788.4" x2="1131" y2="772.4" stroke="#000" stroke-width="1.1"/>
<text x="1021.8" y="773.5" font-size="15" text-anchor="middle" fill="#000">2060</text>
<text x="1207.7" y="740.4" font-size="15" text-anchor="middle" fill="#000">2300</text>
<line x1="1132" y1="748.5" x2="1290" y2="748.5" stroke="#222" stroke-width="1"/>
<line x1="1124" y1="756.2" x2="1140" y2="740.2" stroke="#000" stroke-width="1.1"/>
<line x1="1281" y1="756.2" x2="1297" y2="740.2" stroke="#000" stroke-width="1.1"/>
<text x="1135.2" y="861.5" font-size="15" text-anchor="middle" fill="#000">4525</text>
<line x1="981.7" y1="869.5" x2="1290" y2="869.5" stroke="#333" stroke-width="1"/>
<line x1="980" y1="877.4" x2="996" y2="861.4" stroke="#000" stroke-width="1.1"/>
<line x1="1281" y1="877.4" x2="1297" y2="861.4" stroke="#000" stroke-width="1.1"/>
<text x="1264.6" y="853.8" font-size="15" text-anchor="middle" fill="#000">655</text>
<line x1="1243.5" y1="848" x2="1243.5" y2="874" stroke="#222" stroke-width="1"/>
<line x1="1235.3" y1="870" x2="1251.3" y2="854" stroke="#000" stroke-width="1.1"/>
<line x1="1243.3" y1="861.5" x2="1290" y2="861.5" stroke="#888" stroke-width="1"/>
<text x="1103.5" y="901.7" font-size="15" text-anchor="middle" fill="#000" transform="rotate(-90 1103.5 901.7)">2100</text>
<line x1="1099.8" y1="821" x2="1119.8" y2="841" stroke="#000" stroke-width="1.1"/>
<line x1="1100.8" y1="964" x2="1118.8" y2="982" stroke="#000" stroke-width="1.1"/>
<line x1="1100.8" y1="597" x2="1118.8" y2="615" stroke="#000" stroke-width="1.1"/>
<line x1="1100.8" y1="671" x2="1118.8" y2="689" stroke="#000" stroke-width="1.1"/>
<line x1="1100.8" y1="745" x2="1118.8" y2="763" stroke="#000" stroke-width="1.1"/>
<line x1="1100.8" y1="522" x2="1118.8" y2="540" stroke="#000" stroke-width="1.1"/>
<text x="1245.2" y="680.4" font-size="15" text-anchor="middle" fill="#000" transform="rotate(-90 1245.2 680.4)">4418</text>
<text x="1244.8" y="1038" font-size="15" text-anchor="middle" fill="#000" transform="rotate(-90 1244.8 1038)">1738</text>
<line x1="1321.5" y1="659" x2="1321.5" y2="731" stroke="#222" stroke-width="1"/>
<line x1="1309" y1="659.5" x2="1335" y2="659.5" stroke="#555" stroke-width="1"/>
<line x1="1312" y1="649" x2="1332" y2="669" stroke="#000" stroke-width="1.1"/>
<line x1="1309" y1="731.5" x2="1335" y2="731.5" stroke="#555" stroke-width="1"/>
<line x1="1312" y1="721" x2="1332" y2="741" stroke="#000" stroke-width="1.1"/>
<line x1="1309" y1="823.5" x2="1335" y2="823.5" stroke="#555" stroke-width="1"/>
<line x1="1312" y1="813" x2="1332" y2="833" stroke="#000" stroke-width="1.1"/>
<line x1="1321.5" y1="731" x2="1321.5" y2="829" stroke="#222" stroke-width="1"/>
<text x="1316" y="695" font-size="15" text-anchor="middle" fill="#000" transform="rotate(-90 1316 695)">1100</text>
<text x="1316" y="776.7" font-size="15" text-anchor="middle" fill="#000" transform="rotate(-90 1316 776.7)">1417</text>
<text x="1308.5" y="444" font-size="15" text-anchor="middle" fill="#000" transform="rotate(-90 1308.5 444)">120</text>
<line x1="1311" y1="441.5" x2="1329" y2="441.5" stroke="#666" stroke-width="1"/>
<line x1="1311" y1="449.5" x2="1329" y2="449.5" stroke="#666" stroke-width="1"/>
<line x1="1306" y1="432.5" x2="1326" y2="458.5" stroke="#000" stroke-width="1"/>
<line x1="1313" y1="432.5" x2="1331" y2="455.5" stroke="#000" stroke-width="1"/>
<line x1="1320.5" y1="435.5" x2="1320.5" y2="453.5" stroke="#666" stroke-width="1"/>
<text x="1314" y="538.5" font-size="15" text-anchor="middle" fill="#000" transform="rotate(-90 1314 538.5)">120</text>
<line x1="1317" y1="535.5" x2="1335" y2="535.5" stroke="#666" stroke-width="1"/>
<line x1="1317" y1="543.5" x2="1335" y2="543.5" stroke="#666" stroke-width="1"/>
<line x1="1312" y1="526.5" x2="1332" y2="552.5" stroke="#000" stroke-width="1"/>
<line x1="1319" y1="526.5" x2="1337" y2="549.5" stroke="#000" stroke-width="1"/>
<line x1="1326.5" y1="529.5" x2="1326.5" y2="547.5" stroke="#666" stroke-width="1"/>
<text x="1309.8" y="985" font-size="15" text-anchor="middle" fill="#000" transform="rotate(-90 1309.8 985)">82</text>
<line x1="1310" y1="977.5" x2="1330" y2="977.5" stroke="#666" stroke-width="1"/>
<line x1="1310" y1="982.5" x2="1330" y2="982.5" stroke="#666" stroke-width="1"/>
<line x1="1306" y1="970" x2="1328" y2="995" stroke="#000" stroke-width="1"/>
<line x1="1311" y1="970" x2="1333" y2="995" stroke="#000" stroke-width="1"/>
<line x1="1317.5" y1="973" x2="1317.5" y2="992" stroke="#555" stroke-width="1"/>
<text x="1369.5" y="461.4" font-size="15" text-anchor="middle" fill="#000">2285</text>
<line x1="1289" y1="468.5" x2="1444" y2="468.5" stroke="#666" stroke-width="1"/>
<line x1="1288" y1="476.4" x2="1304" y2="460.4" stroke="#000" stroke-width="1.1"/>
<line x1="1435" y1="477.4" x2="1453" y2="459.4" stroke="#000" stroke-width="1.1"/>
<line x1="1296.5" y1="445" x2="1296.5" y2="476" stroke="#444" stroke-width="1"/>
<line x1="1444.5" y1="456" x2="1444.5" y2="478" stroke="#444" stroke-width="1"/>
<text x="1622" y="469.7" font-size="15" text-anchor="middle" fill="#000">4110</text>
<line x1="1489" y1="477.5" x2="1900" y2="477.5" stroke="#333" stroke-width="1"/>
<line x1="1480" y1="486.2" x2="1498" y2="468.2" stroke="#000" stroke-width="1.1"/>
<line x1="1753" y1="486.2" x2="1771" y2="468.2" stroke="#000" stroke-width="1.1"/>
<line x1="1290" y1="749.5" x2="1900" y2="749.5" stroke="#333" stroke-width="1"/>
<line x1="1287" y1="758.5" x2="1305" y2="740.5" stroke="#000" stroke-width="1.1"/>
<text x="1717" y="742.6" font-size="15" text-anchor="middle" fill="#000">12955</text>
<line x1="1707.5" y1="711" x2="1707.5" y2="887" stroke="#111" stroke-width="1.1"/>
<line x1="1699.5" y1="708" x2="1715.5" y2="724" stroke="#000" stroke-width="1.1"/>
<line x1="1699.5" y1="875" x2="1715.5" y2="891" stroke="#000" stroke-width="1.1"/>
<text x="1701" y="799.7" font-size="15" text-anchor="middle" fill="#000" transform="rotate(-90 1701 799.7)">2488</text>
<line x1="1480.5" y1="759.5" x2="1498.5" y2="741.5" stroke="#000" stroke-width="1"/>
<line x1="1484.5" y1="759.5" x2="1502.5" y2="741.5" stroke="#000" stroke-width="1"/>
<line x1="1482.5" y1="748.5" x2="1500.5" y2="748.5" stroke="#555" stroke-width="1"/>
<line x1="1488.5" y1="741.5" x2="1488.5" y2="761.5" stroke="#444" stroke-width="1"/>
<line x1="1493.5" y1="741.5" x2="1493.5" y2="761.5" stroke="#444" stroke-width="1"/>
<line x1="1449" y1="873.5" x2="1467" y2="855.5" stroke="#000" stroke-width="1"/>
<line x1="1453" y1="873.5" x2="1471" y2="855.5" stroke="#000" stroke-width="1"/>
<line x1="1451" y1="862.5" x2="1469" y2="862.5" stroke="#555" stroke-width="1"/>
<line x1="1457.5" y1="855.5" x2="1457.5" y2="875.5" stroke="#444" stroke-width="1"/>
<line x1="1461.5" y1="855.5" x2="1461.5" y2="875.5" stroke="#444" stroke-width="1"/>
<text x="1491.5" y="741" font-size="15" text-anchor="middle" fill="#000">75</text>
<text x="1459.2" y="856" font-size="15" text-anchor="middle" fill="#000">75</text>
<text x="1353.3" y="872" font-size="15" text-anchor="middle" fill="#000">1763</text>
<line x1="1290" y1="879.5" x2="1410" y2="879.5" stroke="#222" stroke-width="1"/>
<line x1="1287" y1="888.7" x2="1305" y2="870.7" stroke="#000" stroke-width="1.1"/>
<line x1="1401" y1="888.7" x2="1419" y2="870.7" stroke="#000" stroke-width="1.1"/>
<line x1="1410.5" y1="866" x2="1410.5" y2="884" stroke="#222" stroke-width="1"/>
<line x1="1789.5" y1="673" x2="1789.5" y2="725" stroke="#222" stroke-width="1"/>
<line x1="1776" y1="679.5" x2="1803" y2="679.5" stroke="#555" stroke-width="1"/>
<line x1="1779" y1="669.5" x2="1800" y2="689.5" stroke="#000" stroke-width="1"/>
<line x1="1776" y1="718.5" x2="1803" y2="718.5" stroke="#555" stroke-width="1"/>
<line x1="1779" y1="708.5" x2="1800" y2="728.5" stroke="#000" stroke-width="1"/>
<text x="1784" y="699" font-size="15" text-anchor="middle" fill="#000" transform="rotate(-90 1784 699)">600</text>
<text x="1861.7" y="870.8" font-size="15" text-anchor="start" fill="#000">1030</text>
<line x1="1838" y1="873.5" x2="1900" y2="873.5" stroke="#666" stroke-width="1"/>
<line x1="1844.5" y1="861" x2="1844.5" y2="884" stroke="#222" stroke-width="1"/>
<line x1="1834.5" y1="883.8" x2="1854.5" y2="863.8" stroke="#000" stroke-width="1.1"/>
<line x1="1823.5" y1="888" x2="1823.5" y2="1060" stroke="#111" stroke-width="1.1"/>
<line x1="1815" y1="883" x2="1834" y2="902" stroke="#000" stroke-width="1.1"/>
<rect x="934" y="479" width="65.7" height="18.5" fill="#fff"/>
<text x="935" y="494" font-size="17.75" text-anchor="start" fill="#000">10x21M</text>
<rect x="1257" y="479.5" width="65.7" height="18.5" fill="#fff"/>
<text x="1258" y="494.5" font-size="17.75" text-anchor="start" fill="#000">10x21M</text>
<rect x="1257" y="573.3" width="65.7" height="18.5" fill="#fff"/>
<text x="1258" y="588.3" font-size="17.75" text-anchor="start" fill="#000">10x21M</text>
<rect x="1179.6" y="824.2" width="65.7" height="18.5" fill="#fff"/>
<text x="1180.6" y="839.2" font-size="17.75" text-anchor="start" fill="#000">10x21M</text>
<rect x="1495.8" y="710" width="65.7" height="18.5" fill="#fff"/>
<text x="1496.8" y="725" font-size="17.75" text-anchor="start" fill="#000">10x21M</text>
<rect x="1462.5" y="882.5" width="65.7" height="18.5" fill="#fff"/>
<text x="1463.5" y="897.5" font-size="17.75" text-anchor="start" fill="#000">10x21M</text>
<rect x="1257" y="1016" width="65.7" height="18.5" fill="#fff"/>
<text x="1258" y="1031" font-size="17.75" text-anchor="start" fill="#000">10x21M</text>
<rect x="1885" y="959" width="65.7" height="18.5" fill="#fff"/>
<text x="1886" y="974" font-size="17.75" text-anchor="start" fill="#000">10x21M</text>
</svg>
<style>
.card{background:#fff;border-radius:9px;box-shadow:0 1px 4px rgba(40,55,70,.22),0 0 1px rgba(40,55,70,.25)}
.c5{color:#4f6a80}
.tab{top:40.3px;width:90px;text-align:center;font-size:12px;line-height:16px;color:#dde3e7;white-space:nowrap}
.chip{top:113px;height:29px;border:1px solid #d5dce1;border-radius:15px;font-size:15px;line-height:27px;color:#5a7388;white-space:nowrap}
.zb{left:1284px;width:22px;height:22px;border-radius:4.5px;background:#95a4ae}
</style>
<!-- building selector -->
<div class="card abs" style="left:8.5px;top:8.5px;width:382px;height:45px">
  <svg class="abs" style="left:135px;top:10px" width="26" height="24" viewBox="0 0 26 24"><path d="M3 3.2 H12.6 V8.6 H22.4 V20.8 H3 Z" fill="none" stroke="#3d566b" stroke-width="2.4" stroke-linejoin="round"/><path d="M7.8 3.5V20.5M12.6 8V20.5M3 8.3H12.6M3 12.5H12.6M3 16.7H12.6" stroke="#3d566b" stroke-width="1.5" fill="none"/><path d="M15.2 12.6h2M19 12.6h1.6M15.2 16.6h2M19 16.6h1.6" stroke="#3d566b" stroke-width="2" fill="none"/></svg>
  <div class="abs" style="left:166.5px;top:12px;font-size:15px;line-height:20px;color:#26323c;letter-spacing:.1px">B128</div>
  <svg class="abs" style="left:349px;top:19px" width="10" height="6" viewBox="0 0 10 6"><path d="M0.8 0.8H9.2L5 5Z" fill="#3d566b"/></svg>
</div>
<!-- view mode card -->
<div class="card abs" style="left:8.5px;top:61.5px;width:382px;height:153.5px">
  <svg class="abs" style="left:38px;top:9.2px" width="24" height="24" viewBox="0 0 24 24"><path d="M12 2.6 L20.4 7.2 V16.6 L12 21.4 L3.6 16.6 V7.2 Z M3.8 7.3 L12 12 L20.2 7.3 M12 12 V21.2" fill="none" stroke="#e3e8ec" stroke-width="2" stroke-linejoin="round"/></svg>
  <div class="tab abs" style="left:5.5px">3D</div>
  <svg class="abs" style="left:129.5px;top:10.5px" width="25" height="24" viewBox="0 0 25 24"><path d="M4.2 2.2 H17.2 L22.2 7 V19.6 Q22.2 21.4 20.4 21.4 H4.2 Q2.4 21.4 2.4 19.6 V4 Q2.4 2.2 4.2 2.2 Z" fill="none" stroke="#3d566b" stroke-width="2.5" stroke-linejoin="round"/><path d="M7.8 5.2V18.6M16.8 5.2V18.6M4.6 8.6H20M4.6 15.2H20" stroke="#3d566b" stroke-width="2.1" fill="none"/></svg>
  <div class="tab abs c5" style="left:97px;color:#5a7186">Drawing</div>
  <svg class="abs" style="left:221px;top:10px" width="24" height="24" viewBox="0 0 24 24"><rect x="2" y="2.4" width="20.4" height="18.4" rx="1.6" fill="none" stroke="#e3e8ec" stroke-width="1.7"/><path d="M12.2 2.4V20.8" stroke="#e3e8ec" stroke-width="1.7"/></svg>
  <div class="tab abs" style="left:188.5px">Split</div>
  <svg class="abs" style="left:312px;top:10px" width="26" height="24" viewBox="0 0 26 24"><path d="M13 2.6 L21.4 7.2 V16.6 L13 21.4 L4.6 16.6 V7.2 Z M4.8 7.3 L13 12 L21.2 7.3 M13 12 V21.2" fill="none" stroke="#e3e8ec" stroke-width="1.6" stroke-linejoin="round"/><path d="M1 11.6H25" stroke="#eef1f3" stroke-width="1.2" stroke-dasharray="3 2"/></svg>
  <div class="tab abs" style="left:279.5px">3D section</div>
  <div class="abs" style="left:109.5px;top:62.3px;width:66px;height:2.4px;background:#86c440"></div>
  <div class="abs" style="left:14px;top:79px;font-size:14.3px;line-height:20px;color:#5a7388;white-space:nowrap;letter-spacing:-1.1px">LEVE…</div>
  <div class="abs" style="left:72px;top:79px;font-size:14.6px;line-height:20px;color:#5a7388;white-space:nowrap;letter-spacing:-.2px">• 128-ABC-01-DR-A-104-GA PLAN LEVE…</div>
  <svg class="abs" style="left:351px;top:78px" width="21" height="21" viewBox="0 0 21 21"><circle cx="10.3" cy="10.5" r="8.4" fill="none" stroke="#3d566b" stroke-width="1.6"/><path d="M10.3 9.2V15" stroke="#3d566b" stroke-width="1.9"/><circle cx="10.3" cy="6.4" r="1.15" fill="#3d566b"/></svg>
  <div class="abs" style="left:5.5px;top:105.5px;width:371px;height:1px;background:#dfe4e8"></div>
  <div class="chip abs" style="left:9.5px;width:99px"><svg class="abs" style="left:10px;top:4px" width="20" height="20" viewBox="0 0 20 20"><path d="M4.6 17 V2.8 H15.2 V17 M1.8 17.2 H18.2" fill="none" stroke="#3d566b" stroke-width="1.7"/><circle cx="11.8" cy="10.2" r="1.1" fill="#3d566b"/></svg><span class="abs" style="left:40px">Rooms</span></div>
  <div class="chip abs" style="left:116.5px;width:92px"><svg class="abs" style="left:9px;top:3.5px" width="21" height="21" viewBox="0 0 22 22"><rect x="4" y="4" width="14" height="14" fill="none" stroke="#3d566b" stroke-width="1.9"/><g fill="#fff" stroke="#3d566b" stroke-width="1.7"><circle cx="4" cy="4" r="2"/><circle cx="18" cy="4" r="2"/><circle cx="4" cy="18" r="2"/><circle cx="18" cy="18" r="2"/></g></svg><span class="abs" style="left:39px">Zones</span></div>
</div>
<!-- selection rectangle -->
<div class="abs" style="left:364.3px;top:347.3px;width:168.9px;height:99.7px;border:5.3px solid #fb0007"></div>
<!-- add popup -->
<div class="abs" style="left:373.8px;top:366.3px;width:135px;height:39.6px;border-radius:7px;background:#fff;box-shadow:0 0 9px 3px rgba(60,60,60,.22)"></div>
<div class="abs" style="left:373.8px;top:370.8px;width:135px;height:35px;border-radius:0 0 7px 7px;background:#eef1f4"></div>
<svg class="abs" style="left:388px;top:377.5px" width="17" height="17" viewBox="0 0 17 17"><path d="M8.5 1V16M1 8.5H16" stroke="#3d566b" stroke-width="2" fill="none"/></svg>
<div class="abs" style="left:415px;top:375px;font-size:14.6px;line-height:20px;color:#4f6a80;white-space:nowrap;letter-spacing:.38px">Add 'Toilets'</div>
<!-- popup close -->
<div class="abs" style="left:493.8px;top:353.6px;width:27.4px;height:27.4px;border-radius:14px;background:#fff;border:1px solid #e3e8eb;box-shadow:0 1px 3px rgba(40,55,70,.25)"></div>
<svg class="abs" style="left:500.5px;top:360.3px" width="14" height="14" viewBox="0 0 14 14"><path d="M1.2 1.2L12.8 12.8M12.8 1.2L1.2 12.8" stroke="#3d566b" stroke-width="1.8" fill="none"/></svg>
<!-- marker -->
<svg class="abs" style="left:428px;top:403px" width="30" height="30" viewBox="0 0 30 30"><circle cx="14.3" cy="15.6" r="10.6" fill="rgba(80,80,80,.18)"/><circle cx="14.2" cy="14" r="10.8" fill="#fff"/><circle cx="14.2" cy="14" r="9.3" fill="#8aba3d"/><path d="M6.4 6.2 L14.2 14.2 L22 6.2 Q14.2 -1 6.4 6.2Z" fill="#fff"/></svg>
<!-- cursor -->
<svg class="abs" style="left:476px;top:395px" width="22" height="28" viewBox="0 0 22 28"><path d="M6.3 13.5 V3.4 Q6.3 1.6 7.8 1.6 Q9.3 1.6 9.3 3.4 V9.2 Q10.2 8 11.6 8.6 Q12.4 9 12.4 10 Q13.4 9.2 14.6 9.8 Q15.3 10.3 15.3 11.2 Q16.4 10.6 17.4 11.3 Q18 11.8 18 13 V18.2 Q18 24.5 11.8 24.5 Q8.2 24.5 6.4 21.6 L2.6 15.4 Q2.2 14.2 3.2 13.8 Q4.4 13.5 5.2 14.6 Z" fill="#fff" stroke="#1c2340" stroke-width="1.2" stroke-linejoin="round"/><path d="M9.3 9.2V13.2M12.4 10V13.4M15.3 11.2V13.8" stroke="#1c2340" stroke-width="1.1" fill="none"/></svg>
<!-- hint -->
<div class="abs" style="left:567px;top:762.5px;font-size:18px;line-height:24px;color:#56708a;white-space:nowrap;letter-spacing:.02px;text-shadow:0 0 2px #fff,0 0 2px #fff,0 0 3px #fff,0 0 3px #fff,0 0 4px #fff">Press "Esc" to deselect</div>
<!-- measure -->
<div class="card abs" style="left:597px;top:833.4px;width:127.3px;height:43.5px;border-radius:8px"></div>
<svg class="abs" style="left:612px;top:847px" width="24" height="16" viewBox="0 0 24 16"><rect x="2" y="2.6" width="20" height="11" rx="1.3" fill="none" stroke="#3d566b" stroke-width="2"/><path d="M7 3V7M12 3V7M17 3V7" stroke="#3d566b" stroke-width="1.7"/></svg>
<div class="abs" style="left:642.2px;top:845px;font-size:15px;line-height:20px;color:#4f6a80;white-space:nowrap;-webkit-text-stroke:.35px #4f6a80;letter-spacing:.1px">Measure</div>
<!-- zoom controls -->
<div class="zb abs" style="top:809.8px"><svg width="22" height="22" viewBox="0 0 22 22"><circle cx="11" cy="11" r="2.4" fill="#dfe5e9"/><path d="M11 3.6L13.2 6.4H8.8ZM11 18.4L13.2 15.6H8.8ZM3.6 11L6.4 8.8V13.2ZM18.4 11L15.6 8.8V13.2Z" fill="#cfd7dd"/></svg></div>
<div class="zb abs" style="top:843.4px"><svg width="22" height="22" viewBox="0 0 22 22"><path d="M11 6.4V15.6M6.4 11H15.6" stroke="#fff" stroke-width="1.9"/></svg></div>
<div class="zb abs" style="top:867.2px"><svg width="22" height="22" viewBox="0 0 22 22"><path d="M6.4 11H15.6" stroke="#fff" stroke-width="1.9"/></svg></div>

  </div>
</div>
</body>
</html>
